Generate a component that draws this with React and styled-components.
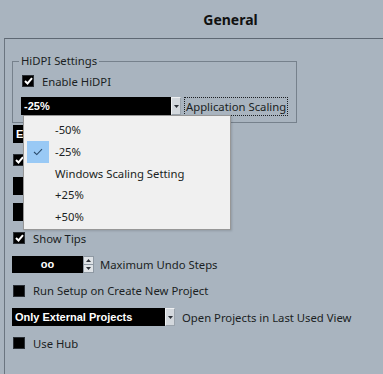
import React from "react";
import styled, { createGlobalStyle } from "styled-components";

const Global = createGlobalStyle`
  html, body {
    margin: 0;
    padding: 0;
    background: #a9b4bf;
  }
  body {
    font-family: "Noto Sans", "Open Sans", sans-serif;
    font-size: 11.3px;
    color: #1b1f23;
  }
`;

const Page = styled.div`
  width: 383px;
  height: 374px;
  overflow: hidden;
  background: #a9b4bf;
`;

const Title = styled.div`
  height: 38px;
  line-height: 40px;
  padding-left: 78px;
  text-align: center;
  font-weight: bold;
  font-size: 14px;
  color: #111;
`;

const Panel = styled.div`
  position: relative;
  margin-left: 4px;
  height: 340px;
  border-top: 1px solid #5e6873;
  border-left: 1px solid #6b7580;
  padding-left: 7px;
`;

const Group = styled.fieldset`
  box-sizing: border-box;
  width: 285px;
  margin: 14px 0 0 0;
  padding: 2px 0 7px 8px;
  border: 1px solid #76818c;
`;

const Legend = styled.legend`
  padding: 0 2px;
  margin-left: -2px;
  line-height: 16px;
  font-size: 11.3px;
`;

const Row = styled.div`
  display: flex;
  align-items: center;
  height: ${({ h }) => h || 26}px;
  margin-top: ${({ mt }) => mt || 0}px;
  gap: ${({ gap }) => gap || 8}px;
`;

const Box = styled.span`
  box-sizing: border-box;
  width: 12px;
  height: 12px;
  background: #000;
  border: 1px solid #2a2f35;
  display: inline-flex;
  align-items: center;
  justify-content: center;
  margin-left: ${({ ml }) => ml || 0}px;
`;

const Label = styled.span`
  white-space: nowrap;
`;

const Select = styled.div`
  box-sizing: border-box;
  display: flex;
  width: ${({ w }) => w}px;
  height: 18px;
  background: #000;
  color: #fff;
  font-family: "Liberation Sans", Arial, sans-serif;
  font-weight: bold;
  font-size: 11px;
  margin-left: ${({ ml }) => ml || 0}px;
`;

const SelectText = styled.span`
  flex: 1;
  padding-left: 3px;
  line-height: 18px;
  white-space: nowrap;
  overflow: hidden;
`;

const Arrow = styled.span`
  width: 10px;
  background: #d3d8dd;
  border: 1px solid #eef0f2;
  border-right-color: #9aa3ac;
  border-bottom-color: #9aa3ac;
  box-sizing: border-box;
  display: flex;
  align-items: center;
  justify-content: center;
`;

const Focus = styled.span`
  border: 1px dotted #1b1f23;
  padding: 0 1px;
  line-height: 17px;
  white-space: nowrap;
`;

const Rows = styled.div`
  margin-top: -2px;
`;

const Spin = styled.div`
  display: flex;
  height: 17px;
`;

const SpinField = styled.div`
  width: 71px;
  background: #000;
  color: #fff;
  font-family: "Liberation Sans", Arial, sans-serif;
  font-weight: bold;
  font-size: 11px;
  line-height: 17px;
  text-align: center;
`;

const SpinButtons = styled.div`
  width: 11px;
  display: flex;
  flex-direction: column;
  border: 1px solid #8f99a3;
  box-sizing: border-box;
`;

const SpinHalf = styled.span`
  flex: 1;
  background: #dfe3e7;
  display: flex;
  align-items: center;
  justify-content: center;
  border-top: ${({ top }) => (top ? "none" : "1px solid #8f99a3")};
`;

const Popup = styled.div`
  position: absolute;
  left: 18px;
  top: 76px;
  width: 208px;
  box-sizing: border-box;
  background: #f0f0f0;
  border: 1px solid #979797;
  padding: 3px 3px 2px 3px;
  box-shadow: 1px 1px 2px rgba(0, 0, 0, 0.15);
`;

const Item = styled.div`
  display: flex;
  align-items: center;
  height: 21.7px;
  gap: 6px;
`;

const Mark = styled.span`
  width: 22px;
  height: 22px;
  display: flex;
  align-items: center;
  justify-content: center;
  background: ${({ on }) => (on ? "#99c9f5" : "transparent")};
`;

const Check = () => (
  <svg width="9" height="8" viewBox="0 0 9 8">
    <path d="M1 4 L3.5 6.5 L8 1.2" stroke="#fff" strokeWidth="2" fill="none" />
  </svg>
);

const Tri = ({ up }) => (
  <svg width="5" height="3" viewBox="0 0 5 3">
    <path d={up ? "M0 3 L2.5 0 L5 3 Z" : "M0 0 L5 0 L2.5 3 Z"} fill="#2b3036" />
  </svg>
);

const CheckBox = ({ checked, ml }) => <Box ml={ml}>{checked && <Check />}</Box>;

const Dropdown = ({ w, ml, children }) => (
  <Select w={w} ml={ml}>
    <SelectText>{children}</SelectText>
    <Arrow>
      <Tri />
    </Arrow>
  </Select>
);

const options = ["-50%", "-25%", "Windows Scaling Setting", "+25%", "+50%"];

export default function App() {
  return (
    <Page>
      <Global />
      <Title>General</Title>
      <Panel>
        <Group>
          <Legend>HiDPI Settings</Legend>
          <Row h={20}>
            <CheckBox checked ml={1} />
            <Label>Enable HiDPI</Label>
          </Row>
          <Row h={18} mt={6} gap={3}>
            <Dropdown w={160}>-25%</Dropdown>
            <Focus>Application Scaling</Focus>
          </Row>
        </Group>
        <Rows>
          {/* rows below are mostly hidden by the open popup */}
          <Row>
            <Dropdown w={120} ml={1}>E</Dropdown>
          </Row>
          <Row>
            <CheckBox checked ml={1} />
          </Row>
          <Row>
            <Dropdown w={72} ml={1} />
          </Row>
          <Row>
            <Dropdown w={72} ml={1} />
          </Row>
          <Row>
            <CheckBox checked ml={1} />
            <Label>Show Tips</Label>
          </Row>
          <Row gap={6}>
            <Spin>
              <SpinField>oo</SpinField>
              <SpinButtons>
                <SpinHalf top>
                  <Tri up />
                </SpinHalf>
                <SpinHalf>
                  <Tri />
                </SpinHalf>
              </SpinButtons>
            </Spin>
            <Label>Maximum Undo Steps</Label>
          </Row>
          <Row h={27}>
            <CheckBox ml={1} />
            <Label>Run Setup on Create New Project</Label>
          </Row>
          <Row gap={7}>
            <Dropdown w={163}>Only External Projects</Dropdown>
            <Label>Open Projects in Last Used View</Label>
          </Row>
          <Row>
            <CheckBox ml={1} />
            <Label>Use Hub</Label>
          </Row>
        </Rows>
        <Popup>
          {options.map((o) => (
            <Item key={o}>
              <Mark on={o === "-25%"}>
                {o === "-25%" && (
                  <svg width="10" height="8" viewBox="0 0 10 8">
                    <path d="M1 4 L3.8 6.6 L9 1.2" stroke="#2a4a6a" strokeWidth="1.1" fill="none" />
                  </svg>
                )}
              </Mark>
              <Label>{o}</Label>
            </Item>
          ))}
        </Popup>
      </Panel>
    </Page>
  );
}
